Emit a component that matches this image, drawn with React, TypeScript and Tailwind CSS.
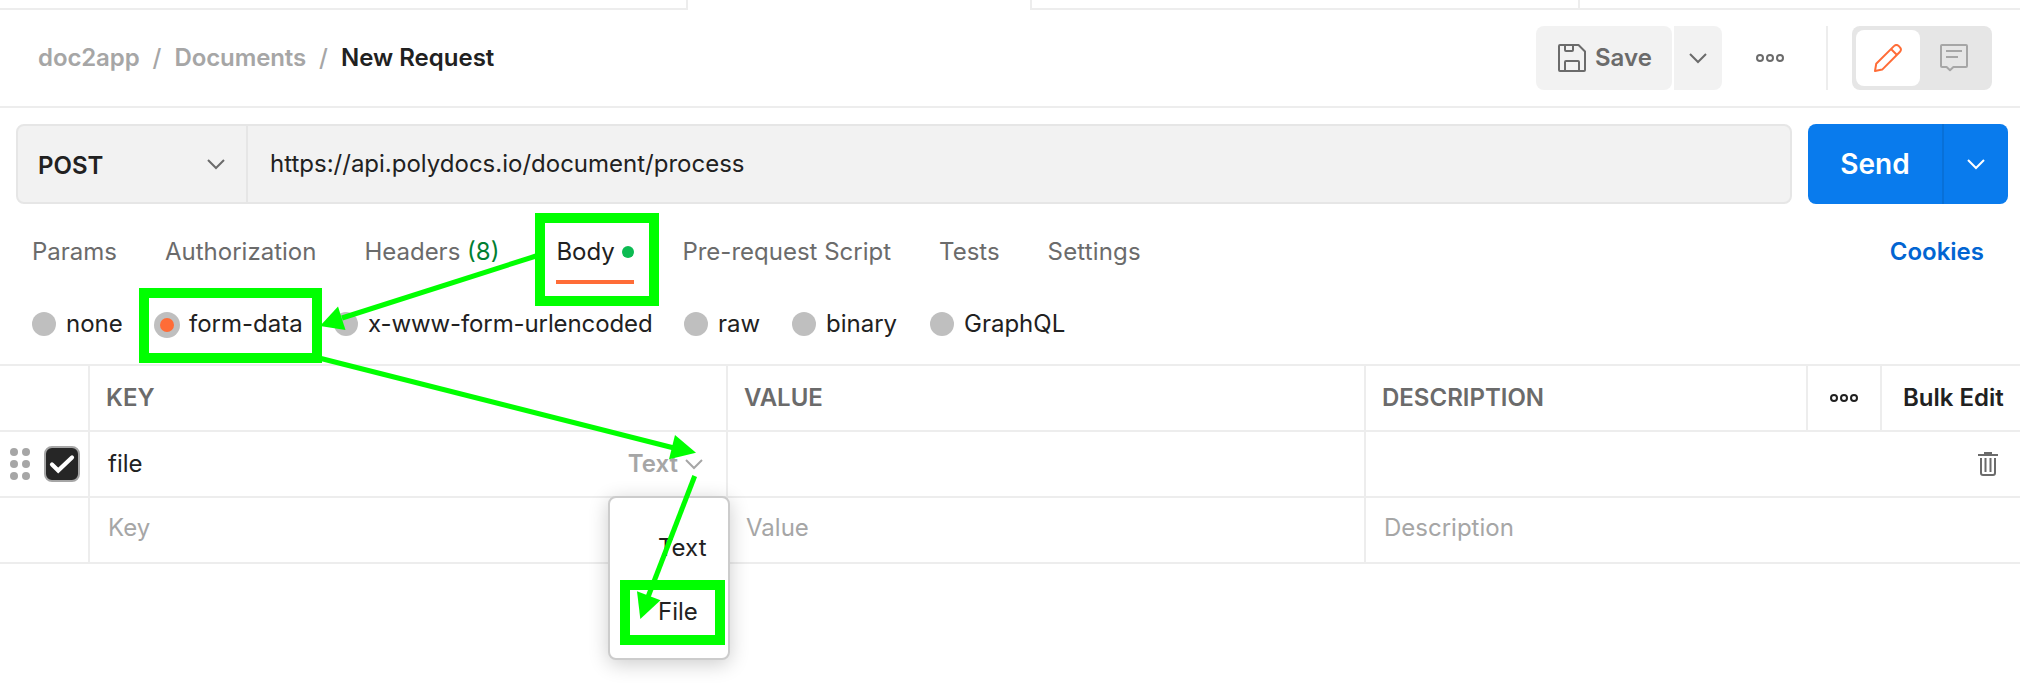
import React from "react";

function Chevron({ className }: { className: string }) {
  return (
    <svg width="20" height="12" viewBox="0 0 20 12" fill="none" stroke="currentColor" strokeWidth="2" className={className}>
      <path d="M2 2 L10 10 L18 2" />
    </svg>
  );
}

function Dots({ className }: { className: string }) {
  return (
    <svg width="28" height="8" viewBox="0 0 28 8" fill="none" stroke="currentColor" strokeWidth="2" className={className}>
      <circle cx="4" cy="4" r="3" />
      <circle cx="14" cy="4" r="3" />
      <circle cx="24" cy="4" r="3" />
    </svg>
  );
}

function TabStrip() {
  return (
    <div className="flex h-[10px] shrink-0">
      <div className="w-[688px] border-r-2 border-b-2 border-[#ededed]" />
      <div className="w-[342px]" />
      <div className="w-[550px] border-x-2 border-b-2 border-[#ededed]" />
      <div className="flex-1 border-b-2 border-[#ededed]" />
    </div>
  );
}

function Header() {
  return (
    <header className="flex h-[98px] items-center border-b-2 border-[#ededed] pr-7 pl-[38px]">
      <nav className="flex flex-1 items-center gap-[13px] font-semibold text-[#a6a6a6]">
        <span className="tracking-[-0.1px]">doc2app</span>
        <span className="font-medium">/</span>
        <span className="tracking-[-0.1px]">Documents</span>
        <span className="font-medium">/</span>
        <span className="font-semibold text-[#212121]">New Request</span>
      </nav>
      <button className="flex h-16 w-[136px] items-center rounded-lg bg-[#f2f2f2] pl-[22px] font-semibold text-[#6b6b6b]">
        <svg width="28" height="28" viewBox="0 0 28 28" fill="none" stroke="currentColor" strokeWidth="2" strokeLinejoin="round" className="mr-[9px]">
          <path d="M2 1 H20.5 L27 7.5 V26 a1 1 0 0 1 -1 1 H2 a1 1 0 0 1 -1 -1 V2 a1 1 0 0 1 1 -1 Z" />
          <path d="M7 1 V6 a1 1 0 0 0 1 1 H14 a1 1 0 0 0 1 -1 V1" />
          <path d="M7 27 V18 a1 1 0 0 1 1 -1 H20 a1 1 0 0 1 1 1 V27" />
        </svg>
        Save
      </button>
      <button className="ml-0.5 flex h-16 w-12 items-center justify-center rounded-r-lg bg-[#f2f2f2]">
        <Chevron className="text-[#6b6b6b]" />
      </button>
      <Dots className="ml-[34px] text-[#6b6b6b]" />
      <div className="ml-[42px] h-16 w-0.5 bg-[#ededed]" />
      <div className="ml-6 flex h-16 w-[140px] rounded-lg bg-[#e6e6e6] p-1">
        <div className="flex h-14 w-16 items-center justify-center rounded-lg bg-white text-[#ff6c37]">
          <svg width="28" height="28" viewBox="0 0 28 28" fill="none" stroke="currentColor" strokeWidth="2" strokeLinejoin="round">
            <path d="M1 27 L2.2 19.8 L20.2 1.9 A3 3 0 0 1 24.6 1.9 L26 3.4 A3 3 0 0 1 26 7.8 L8.2 25.6 Z" />
            <path d="M17 5 L23 11" />
          </svg>
        </div>
        <div className="flex flex-1 items-center justify-center text-[#a6a6a6]">
          <svg width="28" height="28" viewBox="0 0 28 28" fill="none" stroke="currentColor" strokeWidth="2" strokeLinejoin="round">
            <path d="M2 1 H26 a1 1 0 0 1 1 1 V22 a1 1 0 0 1 -1 1 H13.4 L10 26.2 L6.6 23 H2 a1 1 0 0 1 -1 -1 V2 a1 1 0 0 1 1 -1 Z" />
            <path d="M6 7 H22 M6 13 H18" />
          </svg>
        </div>
      </div>
    </header>
  );
}

function UrlBar() {
  return (
    <div className="flex h-24 gap-4 pt-4 pr-3 pl-4">
      <div className="flex h-20 flex-1 rounded-lg border-2 border-[#e6e6e6] bg-[#f2f2f2]">
        <div className="flex w-[230px] items-center justify-between border-r-2 border-[#e6e6e6] pr-5 pl-5 font-semibold text-[#212121]">
          <span className="pt-[3px]">POST</span>
          <Chevron className="text-[#6b6b6b]" />
        </div>
        <div className="flex items-center pl-[22px] text-[#212121]">https://api.polydocs.io/document/process</div>
      </div>
      <div className="flex h-20 w-[200px] overflow-hidden rounded-lg bg-[#097bed] text-white">
        <div className="flex w-[136px] items-center justify-center border-r-2 border-[#0870d8] text-[28px] font-semibold">Send</div>
        <div className="flex flex-1 items-center justify-center">
          <Chevron className="" />
        </div>
      </div>
    </div>
  );
}

function Tabs() {
  return (
    <div className="flex h-[84px] items-start gap-12 pt-2 pr-9 pl-8 leading-[80px] text-[#6b6b6b]">
      <span>Params</span>
      <span>Authorization</span>
      <span className="w-[144px]">
        Headers <span className="text-[#007f31]">(8)</span>
      </span>
      <div className="relative flex h-[72px] w-[78px] items-start justify-between border-b-4 border-[#ff6c37] text-[#212121]">
        <span>Body</span>
        <span className="mt-[34px] size-3 rounded-full bg-[#0cbb52]" />
        <div className="absolute top-[1px] -left-[21px] h-[93px] w-[124px] border-[10px] border-[#00ff00]" />
      </div>
      <span>Pre-request Script</span>
      <span>Tests</span>
      <span className="tracking-[0.15px]">Settings</span>
      <span className="ml-auto font-semibold text-[#0265d2]">Cookies</span>
    </div>
  );
}

function Radio({ label, className }: { label: string; className: string }) {
  return (
    <label className={className}>
      <span className="mr-[10px] size-6 rounded-full bg-[#bfbfbf]" />
      {label}
    </label>
  );
}

function BodyModes() {
  return (
    <div className="flex h-[76px] items-center pb-1 pl-8 text-[#212121]">
      <Radio label="none" className="flex w-[122px] items-center" />
      <label className="relative flex w-[180px] items-center">
        <span className="mt-0.5 mr-[9px] flex size-[26px] items-center justify-center rounded-full bg-[#bfbfbf]">
          <span className="size-[14px] rounded-full bg-[#ff6c37]" />
        </span>
        form-data
        <div className="absolute -top-[20px] -left-[15px] h-[75px] w-[183px] border-[10px] border-[#00ff00]" />
      </label>
      <Radio label="x-www-form-urlencoded" className="flex w-[350px] items-center tracking-[-0.1px]" />
      <Radio label="raw" className="flex w-[108px] items-center" />
      <Radio label="binary" className="flex w-[138px] items-center" />
      <Radio label="GraphQL" className="flex items-center" />
    </div>
  );
}

function TypeMenu() {
  return (
    <div className="absolute top-[64px] -right-[4px] z-10 h-[164px] w-[122px] rounded-lg border-2 border-[#cccccc] bg-white pt-[18px] text-[#212121] shadow-[0_4px_20px_rgba(0,0,0,0.2)]">
      <div className="flex h-16 items-center pl-[48px]">Text</div>
      <div className="relative flex h-16 items-center pl-[48px]">
        File
        <div className="absolute top-0 left-[10px] h-[65px] w-[105px] border-[10px] border-[#00ff00]" />
      </div>
    </div>
  );
}

function ParamsTable() {
  return (
    <div className="border-t-2 border-[#ededed] text-[#6b6b6b]">
      <div className="flex h-[66px] border-b-2 border-[#ededed] font-semibold">
        <div className="w-[90px] border-r-2 border-[#ededed]" />
        <div className="flex w-[638px] items-center border-r-2 border-[#ededed] pl-4">KEY</div>
        <div className="flex w-[638px] items-center border-r-2 border-[#ededed] pl-4">VALUE</div>
        <div className="flex w-[442px] items-center border-r-2 border-[#ededed] pl-4">DESCRIPTION</div>
        <div className="flex w-[74px] items-center justify-center border-r-2 border-[#ededed] text-[#212121]">
          <Dots className="" />
        </div>
        <div className="flex items-center pl-[21px] whitespace-nowrap text-[#212121]">Bulk Edit</div>
      </div>
      <div className="flex h-[66px] border-b-2 border-[#ededed]">
        <div className="flex w-[90px] items-center border-r-2 border-[#ededed] pl-[10px]">
          <svg width="20" height="32" viewBox="0 0 20 32" fill="#a6a6a6" className="mr-[14px]">
            <circle cx="4" cy="4" r="4" />
            <circle cx="16" cy="4" r="4" />
            <circle cx="4" cy="16" r="4" />
            <circle cx="16" cy="16" r="4" />
            <circle cx="4" cy="28" r="4" />
            <circle cx="16" cy="28" r="4" />
          </svg>
          <svg width="36" height="36" viewBox="0 0 36 36" fill="none">
            <rect x="1" y="1" width="34" height="34" rx="7" fill="#262626" stroke="#a6a6a6" strokeWidth="2" />
            <path d="M8 18.5 L14.2 24.5 L28 11.5" stroke="#ffffff" strokeWidth="4.2" strokeLinecap="round" />
          </svg>
        </div>
        <div className="relative flex w-[638px] items-center justify-between border-r-2 border-[#ededed] pr-[22px] pl-[18px]">
          <span className="text-[#212121]">file</span>
          <span className="flex items-center gap-[6px] font-semibold text-[#a6a6a6]">
            Text
            <Chevron className="" />
          </span>
          <TypeMenu />
        </div>
        <div className="w-[638px] border-r-2 border-[#ededed]" />
        <div className="flex flex-1 items-center justify-end pr-[22px]">
          <svg width="20" height="24" viewBox="0 0 20 24" fill="none" stroke="#6b6b6b" strokeWidth="2">
            <path d="M0 3 H20 M6 1 H14" />
            <path d="M3 6 V21 a2 2 0 0 0 2 2 H15 a2 2 0 0 0 2 -2 V6" />
            <path d="M7.5 6 V20 M12.5 6 V20" />
          </svg>
        </div>
      </div>
      <div className="flex h-[66px] border-b-2 border-[#ededed] text-[#a6a6a6]">
        <div className="w-[90px] border-r-2 border-[#ededed]" />
        <div className="flex w-[638px] items-center border-r-2 border-[#ededed] pb-1 pl-[18px]">Key</div>
        <div className="flex w-[638px] items-center border-r-2 border-[#ededed] pb-1 pl-[18px]">Value</div>
        <div className="flex flex-1 items-center pb-1 pl-[18px]">Description</div>
      </div>
    </div>
  );
}

function Arrows() {
  return (
    <svg width="2020" height="692" viewBox="0 0 2020 692" className="pointer-events-none absolute inset-0 z-20" stroke="#00ff00" strokeWidth="5" fill="#00ff00">
      <path d="M536 256 L342 318" />
      <path d="M320 326 L338 306.5 L345.5 330 Z" stroke="none" />
      <path d="M321 358.5 L674 448" />
      <path d="M696 452.7 L675 435 L669 459.3 Z" stroke="none" />
      <path d="M694.7 476 L648 597" />
      <path d="M640.3 619 L637 591.3 L660.5 600.3 Z" stroke="none" />
    </svg>
  );
}

export default function App() {
  return (
    <div className="relative flex h-[692px] w-[2020px] flex-col overflow-hidden bg-white font-['Inter',sans-serif] text-[24px] leading-8">
      <TabStrip />
      <Header />
      <UrlBar />
      <Tabs />
      <BodyModes />
      <ParamsTable />
      <Arrows />
    </div>
  );
}
